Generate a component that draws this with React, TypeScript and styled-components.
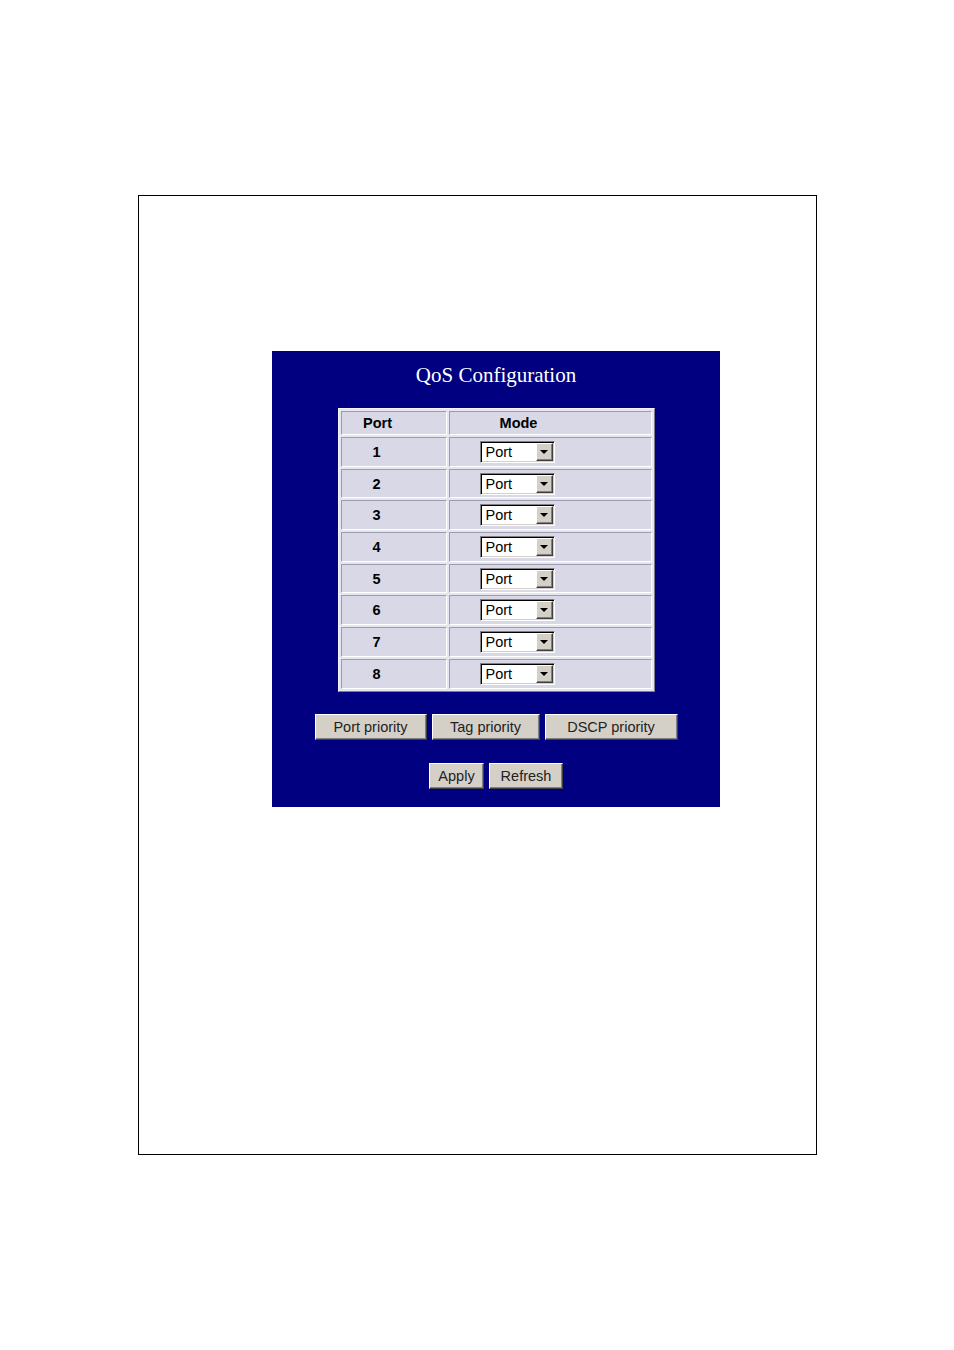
import React from "react";
import styled, { createGlobalStyle } from "styled-components";

const GlobalStyle = createGlobalStyle`
  html, body { margin: 0; padding: 0; background: #ffffff; }
  body { font-family: "Liberation Sans", Arial, sans-serif; }
`;

const Page = styled.div`
  padding: 195px 0 0 138px;
`;

const Frame = styled.div`
  box-sizing: border-box;
  width: 679px;
  height: 960px;
  border: 1px solid #000;
  padding: 155px 0 0 133px;
`;

const Panel = styled.div`
  box-sizing: border-box;
  width: 448px;
  height: 456px;
  background: #000080;
  padding-top: 12px;
  display: flex;
  flex-direction: column;
  align-items: center;
`;

const Title = styled.h1`
  margin: 0;
  font-family: "Liberation Serif", "Times New Roman", serif;
  font-weight: normal;
  font-size: 21px;
  line-height: 24px;
  color: #ffffff;
`;

const Grid = styled.div`
  box-sizing: border-box;
  margin-top: 21px;
  width: 317px;
  display: grid;
  grid-template-columns: 106px 203px;
  grid-template-rows: 24px repeat(8, 29.7px);
  gap: 2px;
  padding: 2px;
  background: #e6e6f0;
  border: 1px solid;
  border-color: #f4f4fa #7c7c8c #7c7c8c #f4f4fa;
`;

const Cell = styled.div<{ $pr: number; $bold?: boolean }>`
  box-sizing: border-box;
  background: #d8d8e6;
  border: 1px solid;
  border-color: #9c9cac #ffffff #ffffff #9c9cac;
  display: flex;
  align-items: center;
  justify-content: center;
  padding-right: ${(p) => p.$pr}px;
  font-size: 14.5px;
  font-weight: ${(p) => (p.$bold ? "bold" : "normal")};
  color: #000;
`;

const SelectBox = styled.div`
  box-sizing: border-box;
  width: 75px;
  height: 22px;
  display: flex;
  align-items: stretch;
  background: #ffffff;
  border-top: 1px solid #808080;
  border-left: 1px solid #808080;
  border-right: 1px solid #ffffff;
  border-bottom: 1px solid #ffffff;
  box-shadow: inset 1px 1px 0 #000, inset -1px -1px 0 #d4d0c8;
`;

const SelectValue = styled.span`
  flex: 1;
  padding-left: 5px;
  font-size: 14.5px;
  font-weight: normal;
  line-height: 20px;
  color: #000;
`;

const SelectArrow = styled.span`
  box-sizing: border-box;
  width: 17px;
  margin: 1px 1px 1px 0;
  background: #d4d0c8;
  border-top: 1px solid #ffffff;
  border-left: 1px solid #ffffff;
  border-right: 1px solid #404040;
  border-bottom: 1px solid #404040;
  box-shadow: inset -1px -1px 0 #808080;
  display: flex;
  align-items: center;
  justify-content: center;
`;

const ButtonRow = styled.div<{ $mt: number }>`
  display: flex;
  gap: 5px;
  margin-top: ${(p) => p.$mt}px;
`;

const Button = styled.button<{ $w: number }>`
  box-sizing: border-box;
  width: ${(p) => p.$w}px;
  height: 26px;
  padding: 0;
  background: #d4d0c8;
  border: 1px solid;
  border-color: #ffffff #404040 #404040 #ffffff;
  box-shadow: inset -1px -1px 0 #808080;
  font-family: "Liberation Sans", Arial, sans-serif;
  font-size: 14.5px;
  color: #222;
  cursor: pointer;
`;

const ports = [1, 2, 3, 4, 5, 6, 7, 8];

export default function App() {
  return (
    <>
      <GlobalStyle />
      <Page>
        <Frame>
          <Panel>
            <Title>QoS Configuration</Title>
            <Grid>
              <Cell $pr={32} $bold>Port</Cell>
              <Cell $pr={63} $bold>Mode</Cell>
              {ports.map((p) => (
                <React.Fragment key={p}>
                  <Cell $pr={34} $bold>{p}</Cell>
                  <Cell $pr={66}>
                    <SelectBox>
                      <SelectValue>Port</SelectValue>
                      <SelectArrow>
                        <svg width="8" height="4" viewBox="0 0 8 4">
                          <path d="M0 0H8L4 4Z" fill="#000" />
                        </svg>
                      </SelectArrow>
                    </SelectBox>
                  </Cell>
                </React.Fragment>
              ))}
            </Grid>
            <ButtonRow $mt={22}>
              <Button $w={112}>Port priority</Button>
              <Button $w={108}>Tag priority</Button>
              <Button $w={133}>DSCP priority</Button>
            </ButtonRow>
            <ButtonRow $mt={23}>
              <Button $w={55}>Apply</Button>
              <Button $w={74}>Refresh</Button>
            </ButtonRow>
          </Panel>
        </Frame>
      </Page>
    </>
  );
}
